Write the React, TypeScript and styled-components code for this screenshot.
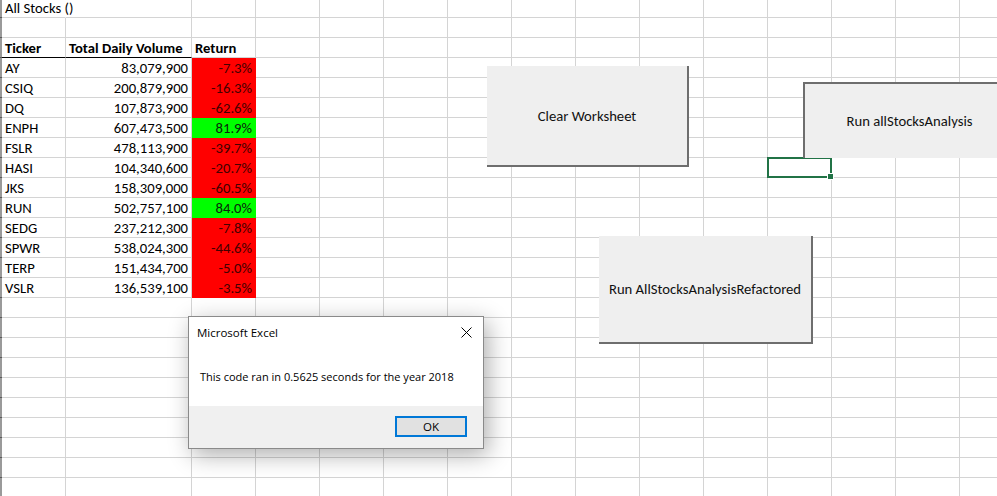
import React from "react";
import styled, { createGlobalStyle, css } from "styled-components";

const SHEET_FONT = `Carlito, Lato, "Liberation Sans", sans-serif`;
const UI_FONT = `"Segoe UI", "Open Sans", "Noto Sans", sans-serif`;

const GlobalStyle = createGlobalStyle`
  html, body { margin: 0; padding: 0; background: #fff; overflow: hidden; }
  #root { width: 997px; height: 496px; }
`;

const Canvas = styled.div`
  position: relative;
  width: 997px;
  height: 496px;
  overflow: hidden;
  background: #fff;
  font-family: ${SHEET_FONT};
  font-size: 14.67px;
  color: #000;
`;

const Grid = styled.div`
  display: grid;
  grid-template-columns: 2px 64px 126px repeat(13, 64px);
  grid-template-rows: 18px;
  grid-auto-rows: 20px;
`;

const RowEdge = styled.div`
  box-sizing: border-box;
  background: #9a9a9a;
  border-bottom: 1px solid #5a5a5a;
`;

const Cell = styled.div<{
  $align?: "left" | "right";
  $fill?: string;
  $open?: boolean;
  $bold?: boolean;
  $underline?: boolean;
  $ink?: string;
}>`
  box-sizing: border-box;
  min-width: 0;
  border-right: 1px solid
    ${(p) => (p.$open ? "transparent" : p.$fill ?? "#d4d4d4")};
  border-bottom: 1px solid
    ${(p) => (p.$underline ? "#000" : p.$fill ?? "#d4d4d4")};
  background: ${(p) => p.$fill ?? "transparent"};
  display: flex;
  align-items: flex-end;
  justify-content: ${(p) => (p.$align === "right" ? "flex-end" : "flex-start")};
  padding: 0 3px 1px 3px;
  white-space: nowrap;
  overflow: visible;
  line-height: 16px;
  font-weight: ${(p) => (p.$bold ? 700 : 400)};
  color: ${(p) => p.$ink ?? "#000"};
`;

const Selection = styled.div`
  position: absolute;
  left: 767px;
  top: 157px;
  width: 65px;
  height: 21px;
  box-sizing: border-box;
  border: 2px solid #217346;
`;

const FillHandle = styled.div`
  position: absolute;
  right: -4px;
  bottom: -4px;
  width: 5px;
  height: 5px;
  background: #217346;
  border: 1px solid #fff;
`;

const FormButton = styled.div<{
  $x: number;
  $y: number;
  $w: number;
  $h: number;
  $sunken?: boolean;
}>`
  position: absolute;
  left: ${(p) => p.$x}px;
  top: ${(p) => p.$y}px;
  width: ${(p) => p.$w}px;
  height: ${(p) => p.$h}px;
  box-sizing: border-box;
  background: #efefef;
  display: flex;
  align-items: center;
  justify-content: center;
  font-family: ${SHEET_FONT};
  font-size: 14.67px;
  color: #111;
  white-space: nowrap;
  ${(p) =>
    p.$sunken
      ? css`
          border-top: 2px solid #6e6e6e;
          border-left: 2px solid #6e6e6e;
        `
      : css`
          border-right: 2px solid #6e6e6e;
          border-bottom: 2px solid #6e6e6e;
        `}
`;

const Dialog = styled.div`
  position: absolute;
  left: 188px;
  top: 316px;
  width: 296px;
  height: 133px;
  box-sizing: border-box;
  border: 1px solid #8a8a8a;
  background: #fff;
  box-shadow: 4px 6px 22px rgba(0, 0, 0, 0.32);
  display: flex;
  flex-direction: column;
  font-family: ${UI_FONT};
  font-size: 11px;
  color: #000;
`;

const TitleBar = styled.div`
  height: 30px;
  display: flex;
  align-items: center;
  justify-content: space-between;
  padding: 0 11px 0 8px;
  font-size: 11.5px;
`;

const Message = styled.div`
  height: 59px;
  display: flex;
  align-items: center;
  padding-left: 11px;
`;

const Footer = styled.div`
  flex: 1;
  background: #f0f0f0;
  display: flex;
  justify-content: flex-end;
  align-items: flex-start;
  padding: 10px 16px 0 0;
`;

const OkButton = styled.div`
  width: 72px;
  height: 21px;
  box-sizing: border-box;
  border: 2px solid #0078d7;
  background: #e1e1e1;
  display: flex;
  align-items: center;
  justify-content: center;
  font-size: 11.5px;
`;

const CloseIcon = () => (
  <svg width="11" height="11" viewBox="0 0 11 11">
    <path d="M0.5 0.5 L10.5 10.5 M10.5 0.5 L0.5 10.5" stroke="#000" strokeWidth="1" fill="none" />
  </svg>
);

type Stock = [string, string, string];

const stocks: Stock[] = [
  ["AY", "83,079,900", "-7.3%"],
  ["CSIQ", "200,879,900", "-16.3%"],
  ["DQ", "107,873,900", "-62.6%"],
  ["ENPH", "607,473,500", "81.9%"],
  ["FSLR", "478,113,900", "-39.7%"],
  ["HASI", "104,340,600", "-20.7%"],
  ["JKS", "158,309,000", "-60.5%"],
  ["RUN", "502,757,100", "84.0%"],
  ["SEDG", "237,212,300", "-7.8%"],
  ["SPWR", "538,024,300", "-44.6%"],
  ["TERP", "151,434,700", "-5.0%"],
  ["VSLR", "136,539,100", "-3.5%"],
];

const EXTRA_COLS = 13;
const TRAIL_ROWS = 10;

const Blanks = ({ n }: { n: number }) => (
  <>
    {Array.from({ length: n }, (_, i) => (
      <Cell key={`b${i}`} />
    ))}
  </>
);

export default function App() {
  return (
    <>
      <GlobalStyle />
      <Canvas>
        <Grid>
          {/* Row 1 */}
          <RowEdge />
          <Cell $open>All Stocks ()</Cell>
          <Cell />
          <Blanks n={EXTRA_COLS} />

          {/* Row 2 */}
          <RowEdge />
          <Cell />
          <Cell />
          <Blanks n={EXTRA_COLS} />

          {/* Header */}
          <RowEdge />
          <Cell $bold $underline>
            Ticker
          </Cell>
          <Cell $bold $underline>
            Total Daily Volume
          </Cell>
          <Cell $bold>Return</Cell>
          <Blanks n={EXTRA_COLS - 1} />

          {stocks.map(([t, v, r]) => {
            const up = !r.startsWith("-");
            return (
              <React.Fragment key={t}>
                <RowEdge />
                <Cell>{t}</Cell>
                <Cell $align="right">{v}</Cell>
                <Cell
                  $align="right"
                  $fill={up ? "#00ff00" : "#ff0000"}
                  $ink={up ? "#0b250b" : "#420000"}
                >
                  {r}
                </Cell>
                <Blanks n={EXTRA_COLS - 1} />
              </React.Fragment>
            );
          })}

          {Array.from({ length: TRAIL_ROWS }, (_, r) => (
            <React.Fragment key={`tr${r}`}>
              <RowEdge />
              <Cell />
              <Cell />
              <Blanks n={EXTRA_COLS} />
            </React.Fragment>
          ))}
        </Grid>

        <Selection>
          <FillHandle />
        </Selection>

        <FormButton $x={487} $y={66} $w={202} $h={101}>
          Clear Worksheet
        </FormButton>
        <FormButton $x={803} $y={82} $w={211} $h={76} $sunken>
          Run allStocksAnalysis
        </FormButton>
        <FormButton $x={599} $y={236} $w={214} $h={108}>
          Run AllStocksAnalysisRefactored
        </FormButton>

        <Dialog>
          <TitleBar>
            <span>Microsoft Excel</span>
            <CloseIcon />
          </TitleBar>
          <Message>This code ran in 0.5625 seconds for the year 2018</Message>
          <Footer>
            <OkButton>OK</OkButton>
          </Footer>
        </Dialog>
      </Canvas>
    </>
  );
}
